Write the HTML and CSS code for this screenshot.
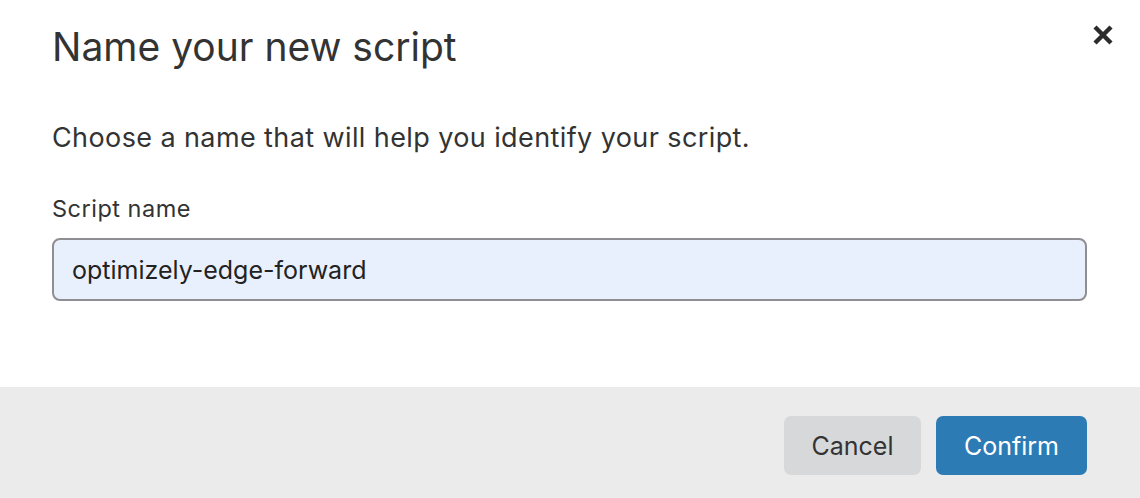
FILE: index.html
```html
<!DOCTYPE html>
<html>
<head>
<meta charset="utf-8">
<link rel="stylesheet" href="styles.css">
</head>
<body>
<div class="dialog">
  <div class="body">
    <div class="header">
      <h1 class="title">Name your new script</h1>
      <button class="close" aria-label="Close">
        <svg width="22" height="22" viewBox="0 0 22 22"><path d="M3 3L19 19M19 3L3 19" stroke="#2b2b2b" stroke-width="4.4" stroke-linecap="butt"/></svg>
      </button>
    </div>
    <p class="desc">Choose a name that will help you identify your script.</p>
    <label class="label" for="name">Script name</label>
    <input class="input" id="name" type="text" value="optimizely-edge-forward">
  </div>
  <div class="footer">
    <button class="btn btn-cancel">Cancel</button>
    <button class="btn btn-confirm">Confirm</button>
  </div>
</div>
</body>
</html>
```
FILE: styles.css
```css
* { box-sizing: border-box; }
html, body { margin: 0; padding: 0; }
body {
  width: 1140px;
  height: 498px;
  overflow: hidden;
  background: #ffffff;
  font-family: Inter, "Liberation Sans", Arial, sans-serif;
  color: #333333;
}
.dialog {
  display: flex;
  flex-direction: column;
  height: 498px;
}
.body {
  height: 387px;
  padding: 0 53px 0 52px;
  display: flex;
  flex-direction: column;
}
.header {
  display: flex;
  justify-content: space-between;
  align-items: flex-start;
}
.title {
  margin: 23px 0 0 0;
  font-size: 39px;
  font-weight: 400;
  line-height: 48px;
  color: #333333;
}
.close {
  margin: 24px -27px 0 0;
  padding: 0;
  border: 0;
  background: none;
  width: 22px;
  height: 22px;
  display: flex;
}
.desc {
  margin: 50px 0 0 0;
  font-size: 27px;
  line-height: 34px;
  letter-spacing: 0.4px;
  color: #333333;
}
.label {
  margin-top: 40px;
  font-size: 23.5px;
  line-height: 28px;
  letter-spacing: 0.5px;
  color: #333333;
}
.input {
  margin-top: 15px;
  width: 1035px;
  height: 63px;
  border: 2px solid #8e8e93;
  border-radius: 8px;
  background: #e9f0fd;
  padding: 0 18px;
  font-family: Inter, "Liberation Sans", Arial, sans-serif;
  font-size: 25px;
  color: #222222;
  outline: none;
}
.footer {
  flex: 1;
  background: #ebebeb;
  display: flex;
  justify-content: flex-end;
  align-items: flex-start;
  padding: 29px 53px 0 0;
  gap: 15px;
}
.btn {
  height: 59px;
  border: 0;
  border-radius: 7px;
  font-family: Inter, "Liberation Sans", Arial, sans-serif;
  font-size: 25px;
  padding: 0;
}
.btn-cancel {
  width: 137px;
  background: #d7d8d9;
  color: #333333;
}
.btn-confirm {
  width: 151px;
  background: #2c7bb5;
  color: #ffffff;
}
```
